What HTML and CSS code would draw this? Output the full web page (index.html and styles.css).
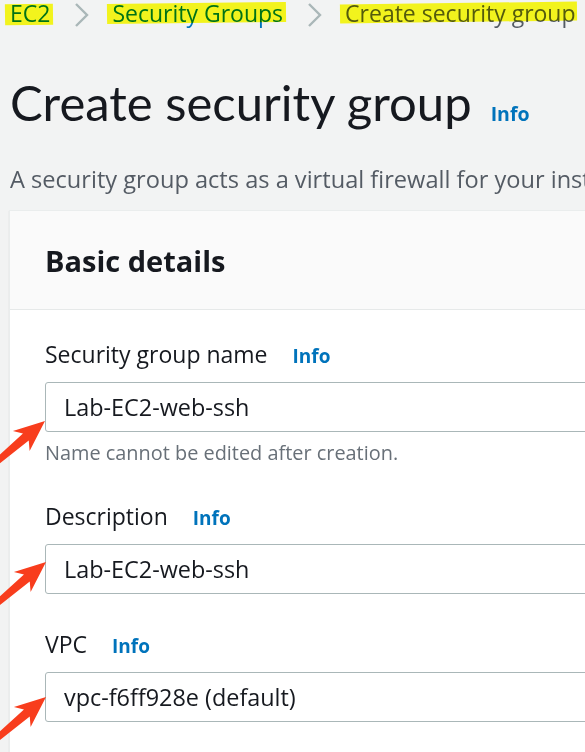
FILE: index.html
```html
<!DOCTYPE html>
<html>
<head>
<meta charset="utf-8">
<link rel="stylesheet" href="styles.css">
</head>
<body>
<div class="page">
  <nav class="crumbs">
    <span class="crumb link">EC2<i class="hl hl1"></i></span>
    <svg class="chev" width="16" height="26" viewBox="0 0 16 26"><path d="M3 2 L14 13 L3 24" fill="none" stroke="#aab7b8" stroke-width="2.4"/></svg>
    <span class="crumb link">Security Groups<i class="hl hl2"></i></span>
    <svg class="chev" width="16" height="26" viewBox="0 0 16 26"><path d="M3 2 L14 13 L3 24" fill="none" stroke="#aab7b8" stroke-width="2.4"/></svg>
    <span class="crumb current">Create security group<i class="hl hl3"></i></span>
  </nav>

  <h1 class="title">Create security group <a class="info info-lg">Info</a></h1>
  <p class="desc">A security group acts as a virtual firewall for your instance to control inbound and outbound traffic.</p>

  <section class="card">
    <header class="card-head">
      <h2 class="card-title">Basic details</h2>
    </header>
    <div class="card-body">
      <div class="field">
        <label class="label">Security group name <a class="info">Info</a></label>
        <div class="input">Lab-EC2-web-ssh</div>
        <div class="hint">Name cannot be edited after creation.</div>
      </div>
      <div class="field">
        <label class="label">Description <a class="info">Info</a></label>
        <div class="input">Lab-EC2-web-ssh</div>
      </div>
      <div class="field">
        <label class="label">VPC <a class="info">Info</a></label>
        <div class="input">vpc-f6ff928e (default)</div>
      </div>
    </div>
  </section>

  <svg class="arrows" width="585" height="752" viewBox="0 0 585 752">
    <g fill="#f83d1d">
      <polygon transform="translate(45 421) rotate(-40)" points="0,0 -31,-13 -25,-4.5 -90,-2 -90,2.5 -25,4.5 -31,13"/>
      <polygon transform="translate(46 562) rotate(-40)" points="0,0 -31,-13 -25,-4.5 -90,-2 -90,2.5 -25,4.5 -31,13"/>
      <polygon transform="translate(46 697) rotate(-40)" points="0,0 -31,-13 -25,-4.5 -90,-2 -90,2.5 -25,4.5 -31,13"/>
    </g>
  </svg>
</div>
</body>
</html>
```

FILE: styles.css
```css
* { box-sizing: border-box; }
html, body {
  margin: 0;
  padding: 0;
  background: #f2f3f3;
}
body {
  width: 585px;
  height: 752px;
  overflow: hidden;
  font-family: "Open Sans", Lato, sans-serif;
  color: #16191f;
}
.page {
  position: relative;
  width: 585px;
  height: 752px;
  padding-left: 10px;
  white-space: nowrap;
  overflow: hidden;
}
.crumbs {
  display: flex;
  align-items: center;
  height: 26px;
  font-size: 23px;
  gap: 23px;
}
.crumb {
  position: relative;
  line-height: 26px;
}
.crumb.link { color: #0073bb; }
.crumb.current { color: #545b64; }
.chev { flex: none; margin-top: 4px; }
.hl {
  position: absolute;
  background: #ffff1e;
  mix-blend-mode: multiply;
  top: 4px;
  bottom: 1px;
  left: -5px;
  right: -3px;
  transform: rotate(-0.7deg);
}
.hl2 { top: 3px; bottom: 3px; }
.hl3 { top: 3px; bottom: 4px; right: -2px; }
.title {
  margin: 46px 0 0 0;
  font-family: Lato, "Open Sans", sans-serif;
  font-size: 49px;
  font-weight: 400;
  line-height: 60px;
  display: flex;
  align-items: baseline;
  gap: 19px;
}
.info {
  font-family: "Open Sans", sans-serif;
  color: #0073bb;
  font-weight: 700;
  font-size: 19px;
}
.info-lg { font-size: 19.5px; }
.desc {
  margin: 20px 0 0 0;
  font-size: 23.6px;
  line-height: 30px;
  color: #545b64;
}
.card {
  margin: 16px 0 0 -1px;
  width: 620px;
  height: 700px;
  background: #fff;
  border: 1px solid #eaeded;
  box-shadow: 0 1px 1px rgba(0,28,36,0.15);
}
.card-head {
  height: 99px;
  background: #fafafa;
  border-bottom: 1px solid #e6e9e9;
  padding: 32px 0 0 35px;
}
.card-title {
  margin: 0;
  font-size: 29px;
  font-weight: 700;
  line-height: 36px;
}
.card-body {
  padding: 29px 0 0 35px;
}
.field { margin-bottom: 35px; }
.label {
  display: flex;
  align-items: baseline;
  gap: 25px;
  font-size: 23px;
  line-height: 30px;
  color: #16191f;
}
.input {
  margin-top: 11px;
  height: 50px;
  border: 1px solid #aab7b8;
  border-radius: 3px;
  padding-left: 18px;
  font-size: 23.4px;
  line-height: 48px;
  color: #16191f;
  background: #fff;
}
.hint {
  margin-top: 8px;
  font-size: 19.9px;
  line-height: 26px;
  color: #687078;
}
.arrows {
  position: absolute;
  left: 0;
  top: 0;
  pointer-events: none;
}
```
